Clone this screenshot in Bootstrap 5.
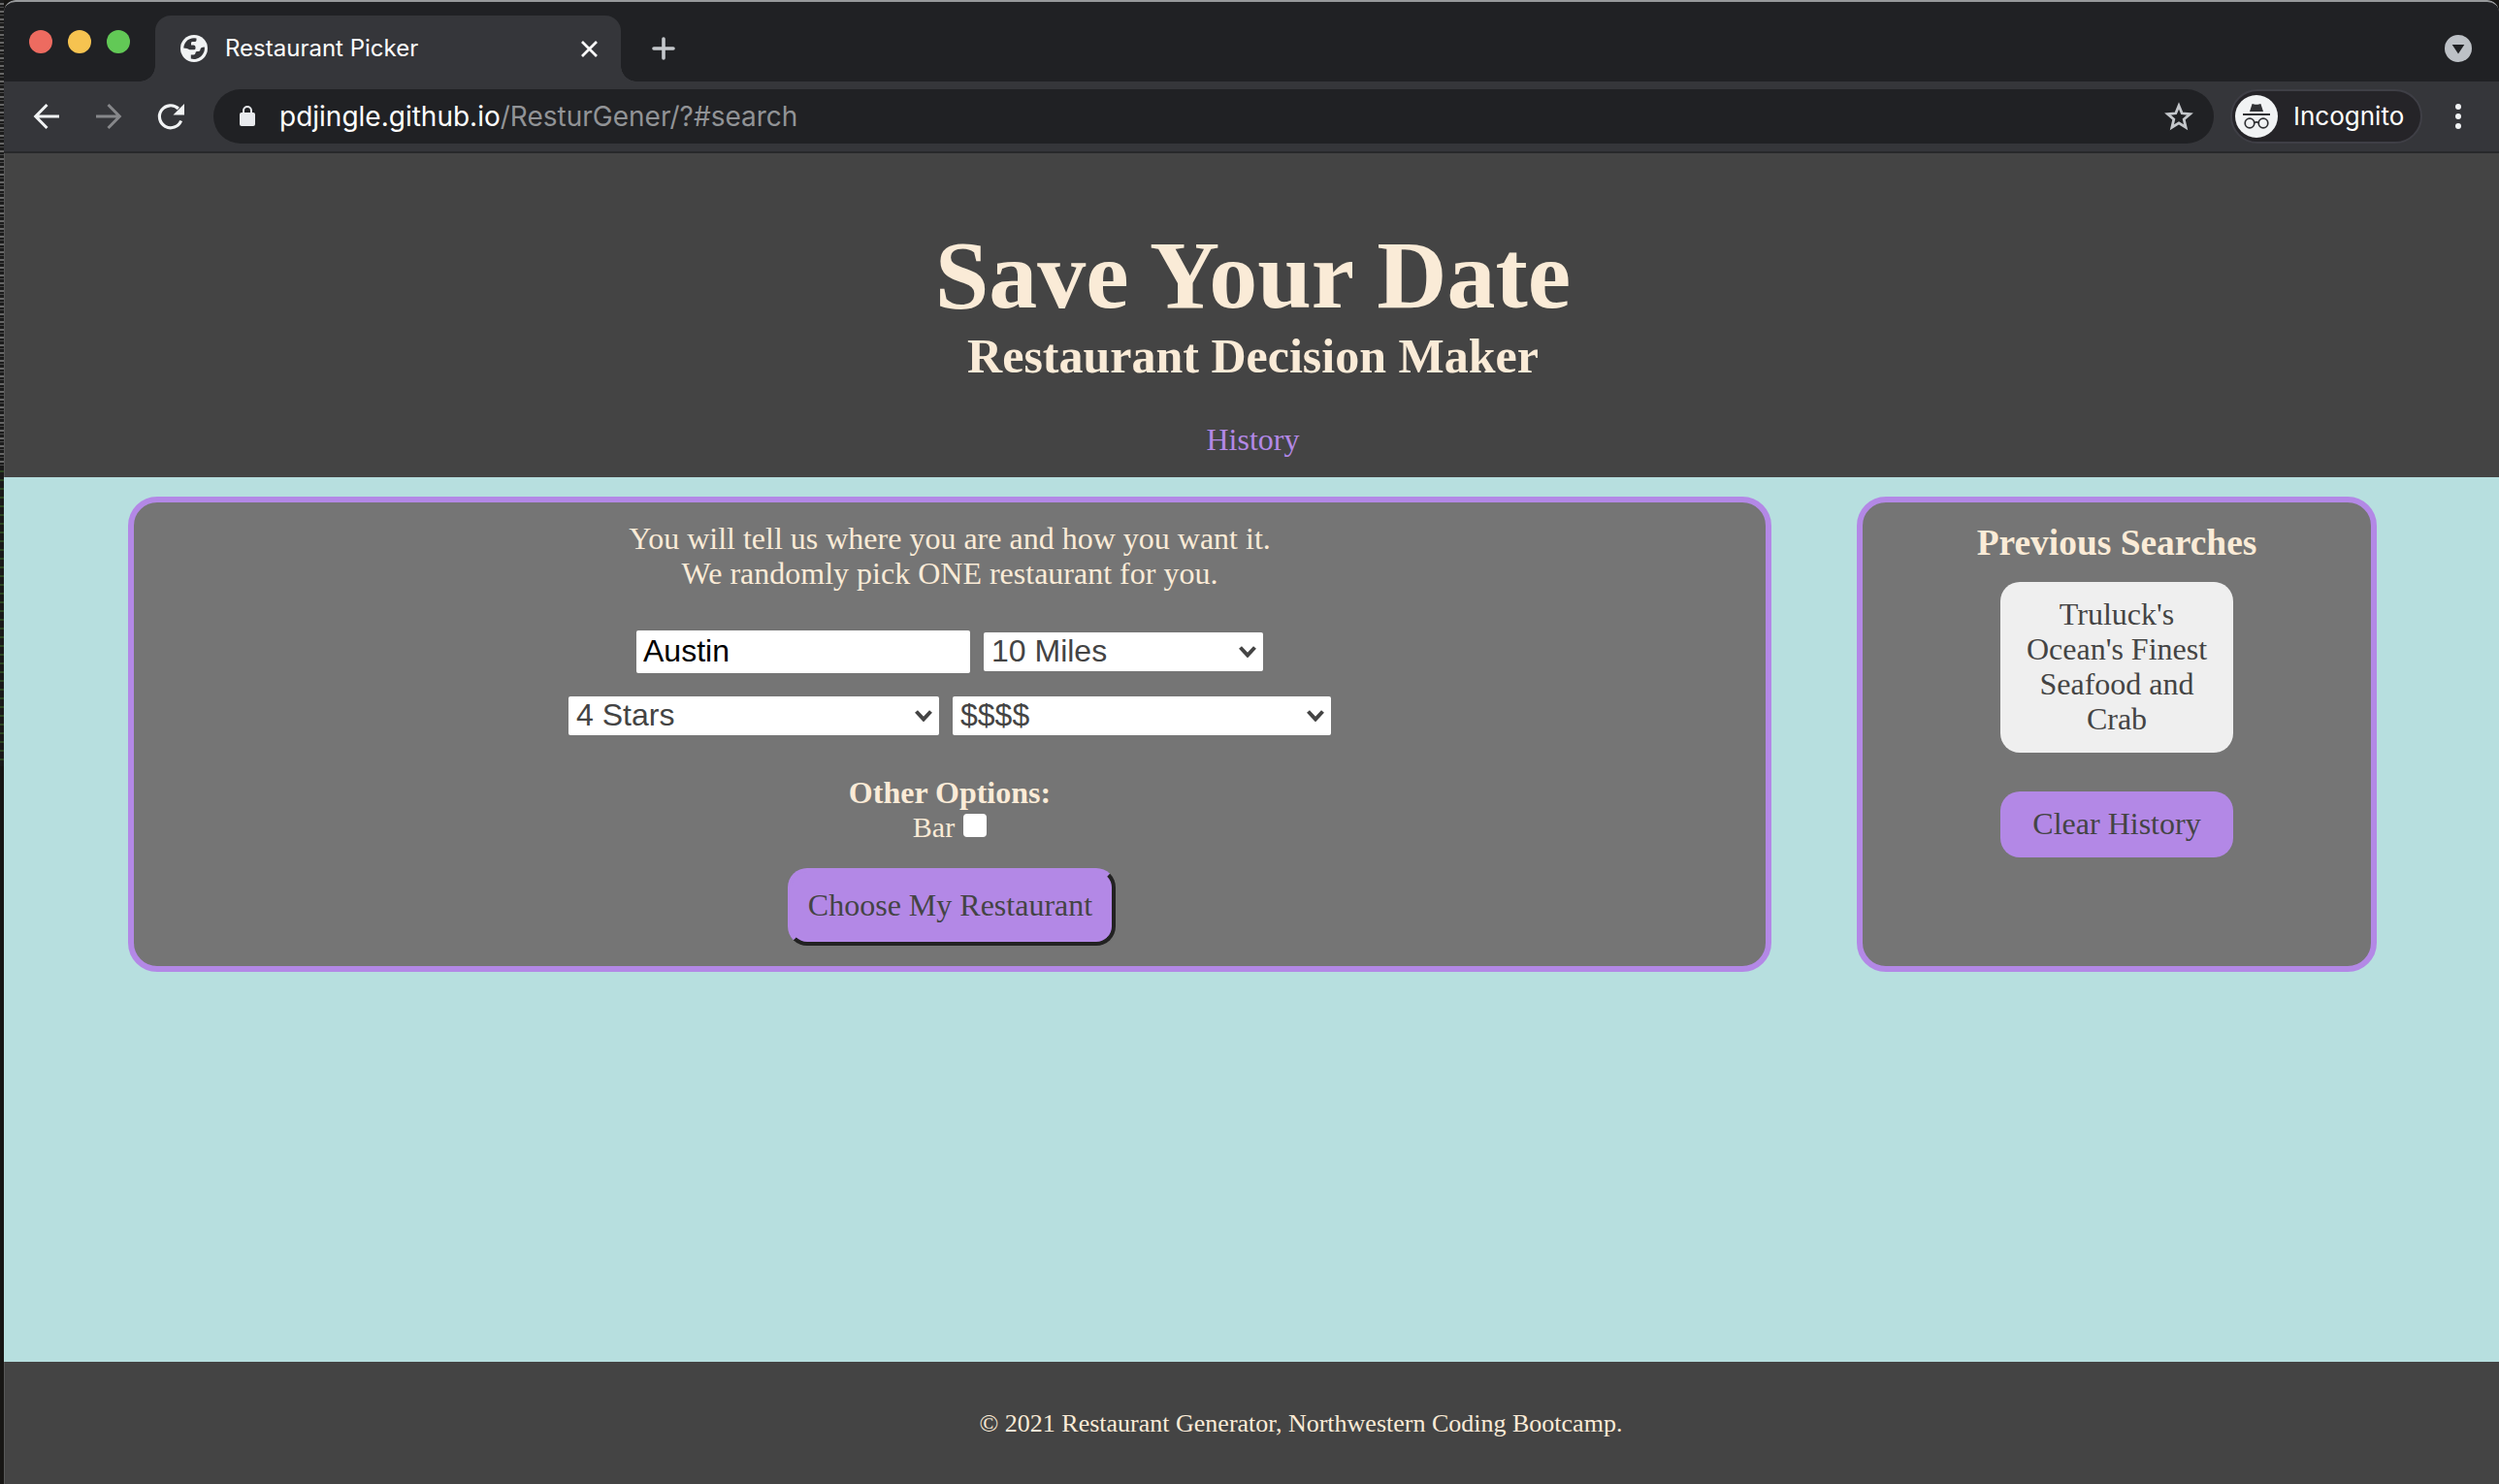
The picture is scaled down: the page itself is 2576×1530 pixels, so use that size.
<!DOCTYPE html>
<html lang="en">
<head>
<meta charset="utf-8">
<title>Restaurant Picker</title>
<link rel="stylesheet" href="https://cdn.jsdelivr.net/npm/bootstrap@5.3.0/dist/css/bootstrap.min.css">
<style>
html, body { height: 1530px; overflow: hidden; }
body { background: #171614; font-family: "Liberation Serif", "Times New Roman", serif; font-size: 32px; line-height: 36px; color: antiquewhite; }
.desk-edge { width: 4px; height: 310px; background: repeating-linear-gradient(#1a1a1a 0 5px, #2b4521 5px 7px, #1a1a1a 7px 9px); }
.desk-edge.upper { height: 480px; background: repeating-linear-gradient(#1c1c1c 0 3px, #666 3px 5px, #1c1c1c 5px 7px, #4a4a4a 7px 8px); }
.window-frame { width: 2572px; border-radius: 12px 12px 0 0; overflow: hidden; }
.tabstrip { height: 84px; background: #202124; border-top: 2px solid #97999b; padding-left: 26px; padding-right: 28px; border-radius: 12px 12px 0 0; }
.lights { gap: 16px; padding-top: 29px; }
.light { width: 24px; height: 24px; border-radius: 50%; }
.light-r { background: #ed6b60; } .light-y { background: #f6c350; } .light-g { background: #62c956; }
.tab-item { position: relative; width: 480px; height: 68px; margin-left: 26px; padding: 0 24px 0 26px; background: #35363a; border-radius: 16px 16px 0 0; }
.tab-item::before, .tab-item::after { content: ""; position: absolute; bottom: 0; width: 16px; height: 16px; }
.tab-item::before { left: -16px; background: radial-gradient(circle at 0 0, transparent 15.5px, #35363a 16px); }
.tab-item::after { right: -16px; background: radial-gradient(circle at 100% 0, transparent 15.5px, #35363a 16px); }
.ui { font-family: Inter, Roboto, sans-serif; }
.tab-title { font-size: 24px; color: #fff; margin-left: 18px; }
.new-tab { margin: 0 0 22px 32px; }
.tab-search { margin-bottom: 20px; }
.toolbar-row { height: 74px; background: #35363a; border-bottom: 2px solid #28292b; padding: 8px 0 8px 28px; }
.omni { width: 2062px; height: 56px; border-radius: 28px; background: #202124; margin-left: 26px; padding: 0 20px 0 26px; font-size: 28px; color: #fff; }
.omni .path-part { color: #919396; }
.incog { width: 198px; height: 56px; border: 2px solid #3f3f46; border-radius: 28px; background: #252428; margin-left: 17px; padding-left: 3px; color: #fff; font-size: 26px; }
svg { display: block; flex: none; }
.site-head { height: 334px; background: #444; border-left: 1px solid #585858; padding-left: 2px; }
.site-head h1 { font-size: 100px; line-height: 112px; font-weight: 700; padding-top: 70px; margin: 0; }
.site-head h2 { font-size: 50px; line-height: 56px; font-weight: 700; margin: -1px 0 0; }
.site-head a { color: #b388e6; text-decoration: none; margin-top: 40px; }
.site-main { height: 912px; background: #b7dfdf; padding: 20px 126px 0 128px; }
.panel { height: 490px; border: 6px solid #b388e6; border-radius: 30px; background: #757575; text-align: center; }
.panel-main { width: 1694px; padding-top: 19px; }
.panel-side { width: 536px; padding-top: 21px; }
.field { background: #fff; color: #444; height: 40px; border-radius: 2px; font-family: "Liberation Sans", Arial, sans-serif; padding: 0 7px 2px 8px; text-align: left; }
.field-city { width: 344px; height: 44px; color: #000; border: 0; padding: 0 7px 2px; }
.w-a { width: 288px; } .w-b { width: 382px; } .w-c { width: 390px; }
.gap-f { gap: 14px; }
.row-one { margin-top: 41px; } .row-two { margin-top: 24px; } .opt-title { margin-top: 41px; }
.opt-line { font-size: 30px; gap: 9px; }
.tick { width: 24px; height: 24px; border-radius: 4px; background: #fff; appearance: none; margin: 0 0 4px; }
.choose { width: 338px; height: 80px; border: 4px solid #b388e6; border-right-color: #222; border-bottom-color: #222; border-radius: 20px; background: #b388e6; color: #444; margin: 24px 0 0 4px; padding: 0 3px 4px 0; }
.panel-side h3 { font-size: 37.44px; line-height: 42px; font-weight: 700; margin: 0 0 19px; }
.pill { width: 240px; border: 0; border-radius: 20px; padding: 15px 16px 17px; color: #444; background: #efefef; }
.pill-clear { background: #b388e6; margin-top: 40px; }
.site-foot { height: 126px; background: #444; border-left: 1px solid #585858; font-size: 26px; line-height: 30px; padding: 49px 0 0 101px; }
</style>
<script src="https://cdn.jsdelivr.net/npm/bootstrap@5.3.0/dist/js/bootstrap.bundle.min.js"></script>
</head>
<body class="d-flex">
<div class="d-flex flex-column"><div class="desk-edge upper"></div><div class="desk-edge"></div></div>
<div class="window-frame d-flex flex-column">
  <div class="tabstrip ui d-flex align-items-end">
    <div class="lights d-flex align-self-start">
      <span class="light light-r"></span><span class="light light-y"></span><span class="light light-g"></span>
    </div>
    <div class="tab-item d-flex align-items-center">
      <svg width="28" height="28" viewBox="0 0 28 28"><circle cx="14" cy="14" r="14" fill="#f1f3f4"/><path d="M3.200 13.500A10.900 10.900 0 0 1 16.500 3.400V5.500Q16.500 7 14.500 7H12Q11 7 11 8.500V10.500H13.500Q15.500 10.500 15.500 12.500V14Q15.500 15.300 14 15.300H9.500Q7.500 13.500 3.200 13.500zM24.800 12.500A10.900 10.900 0 0 1 10.800 24.400V20.500H13.500Q15.500 20.500 15.500 18.500Q15.500 17 17 17H18.500Q20.500 17 20.500 15Q20.500 12.500 24.800 12.500z" fill="#35363a"/></svg>
      <span class="tab-title">Restaurant Picker</span>
      <svg class="ms-auto" width="17" height="17" viewBox="0 0 17 17" stroke="#fff" stroke-width="2.700"><path d="M1 1l15 15M16 1L1 16"/></svg>
    </div>
    <svg class="new-tab" width="24" height="24" viewBox="0 0 24 24" stroke="#c4c7cb" stroke-width="3.600" stroke-linecap="round"><path d="M12 2v20M2 12h20"/></svg>
    <svg class="tab-search ms-auto" width="28" height="28" viewBox="0 0 28 28"><circle cx="14" cy="14" r="14" fill="#bdc1c6"/><path d="M7.700 10h12.600L14 19.500z" fill="#202124"/></svg>
  </div>
  <div class="toolbar-row ui d-flex align-items-center">
    <svg width="32" height="32" viewBox="0 0 32 32" fill="none" stroke="#f1f3f4" stroke-width="3"><path d="M29 16H5M16.500 4L4.700 16l11.800 12"/></svg>
    <svg style="margin-left:32px" width="32" height="32" viewBox="0 0 32 32" fill="none" stroke="#86878a" stroke-width="3"><path d="M3 16h24M15.500 4l11.800 12-11.800 12"/></svg>
    <svg style="margin-left:32px" width="34" height="32" viewBox="0 0 34 32" fill="none" stroke="#f1f3f4" stroke-width="3.200"><path d="M26.600 20.500a11.500 11.500 0 1 1-2.700-12.500"/><path d="M30 3v11.500H18.500z" fill="#f1f3f4" stroke="none"/></svg>
    <div class="omni d-flex align-items-center">
      <svg width="18" height="24" viewBox="0 0 18 24"><rect x="1" y="8" width="16" height="14" rx="2" fill="#e8eaed"/><path d="M5 9V6a4 4 0 0 1 8 0v3" fill="none" stroke="#e8eaed" stroke-width="2"/></svg>
      <span style="margin-left:24px"><span class="host-part">pdjingle.github.io</span><span class="path-part">/ResturGener/?#search</span></span>
      <svg class="ms-auto" width="32" height="32" viewBox="0 0 32 32" fill="none" stroke="#c4c7cb" stroke-width="2.800"><path d="M16 5l3.200 7.800 8.300.7-6.300 5.500 1.900 8.200L16 22.800l-7.100 4.400 1.900-8.200-6.300-5.500 8.300-.7z"/></svg>
    </div>
    <div class="incog d-flex align-items-center">
      <svg width="44" height="44" viewBox="0 0 44 44"><circle cx="22" cy="22" r="22" fill="#f1f3f4"/><path d="M15 17l2.600-8 3 .8h2.800l3-.8 2.600 8zM8 19h28v2H8z" fill="#303134"/><g fill="none" stroke="#303134" stroke-width="1.700"><circle cx="15" cy="29" r="4.800"/><circle cx="29" cy="29" r="4.800"/><path d="M19.800 28.500q2.200-1.200 4.400 0"/></g></svg>
      <span style="margin-left:16px">Incognito</span>
    </div>
    <svg style="margin-left:34px" width="6" height="28" viewBox="0 0 6 28" fill="#f1f3f4"><circle cx="3" cy="4" r="3"/><circle cx="3" cy="14" r="3"/><circle cx="3" cy="24" r="3"/></svg>
  </div>
  <header class="site-head text-center d-flex flex-column align-items-center">
    <h1>Save Your Date</h1>
    <h2>Restaurant Decision Maker</h2>
    <a href="#history">History</a>
  </header>
  <main class="site-main d-flex justify-content-between">
    <section class="panel panel-main d-flex flex-column align-items-center">
      <div>You will tell us where you are and how you want it.<br>We randomly pick ONE restaurant for you.</div>
      <div class="row-one d-flex gap-f align-items-center">
        <input class="field field-city" type="text" value="Austin">
        <div class="field w-a d-flex align-items-center justify-content-between">10 Miles <svg width="18" height="14" viewBox="0 0 18 14" fill="none" stroke="#444" stroke-width="4"><path d="M1.500 3.500L9 11.500l7.500-8"/></svg></div>
      </div>
      <div class="row-two d-flex gap-f">
        <div class="field w-b d-flex align-items-center justify-content-between">4 Stars <svg width="18" height="14" viewBox="0 0 18 14" fill="none" stroke="#444" stroke-width="4"><path d="M1.500 3.500L9 11.500l7.500-8"/></svg></div>
        <div class="field w-c d-flex align-items-center justify-content-between">$$$$ <svg width="18" height="14" viewBox="0 0 18 14" fill="none" stroke="#444" stroke-width="4"><path d="M1.500 3.500L9 11.500l7.500-8"/></svg></div>
      </div>
      <div class="opt-title fw-bold">Other Options:</div>
      <label class="opt-line d-flex align-items-center">Bar <input class="tick" type="checkbox"></label>
      <button class="choose">Choose My Restaurant</button>
    </section>
    <aside class="panel panel-side d-flex flex-column align-items-center">
      <h3>Previous Searches</h3>
      <button class="pill">Truluck's Ocean's Finest Seafood and Crab</button>
      <button class="pill pill-clear">Clear History</button>
    </aside>
  </main>
  <footer class="site-foot text-center">© 2021 Restaurant Generator, Northwestern Coding Bootcamp.</footer>
</div>
</body>
</html>
